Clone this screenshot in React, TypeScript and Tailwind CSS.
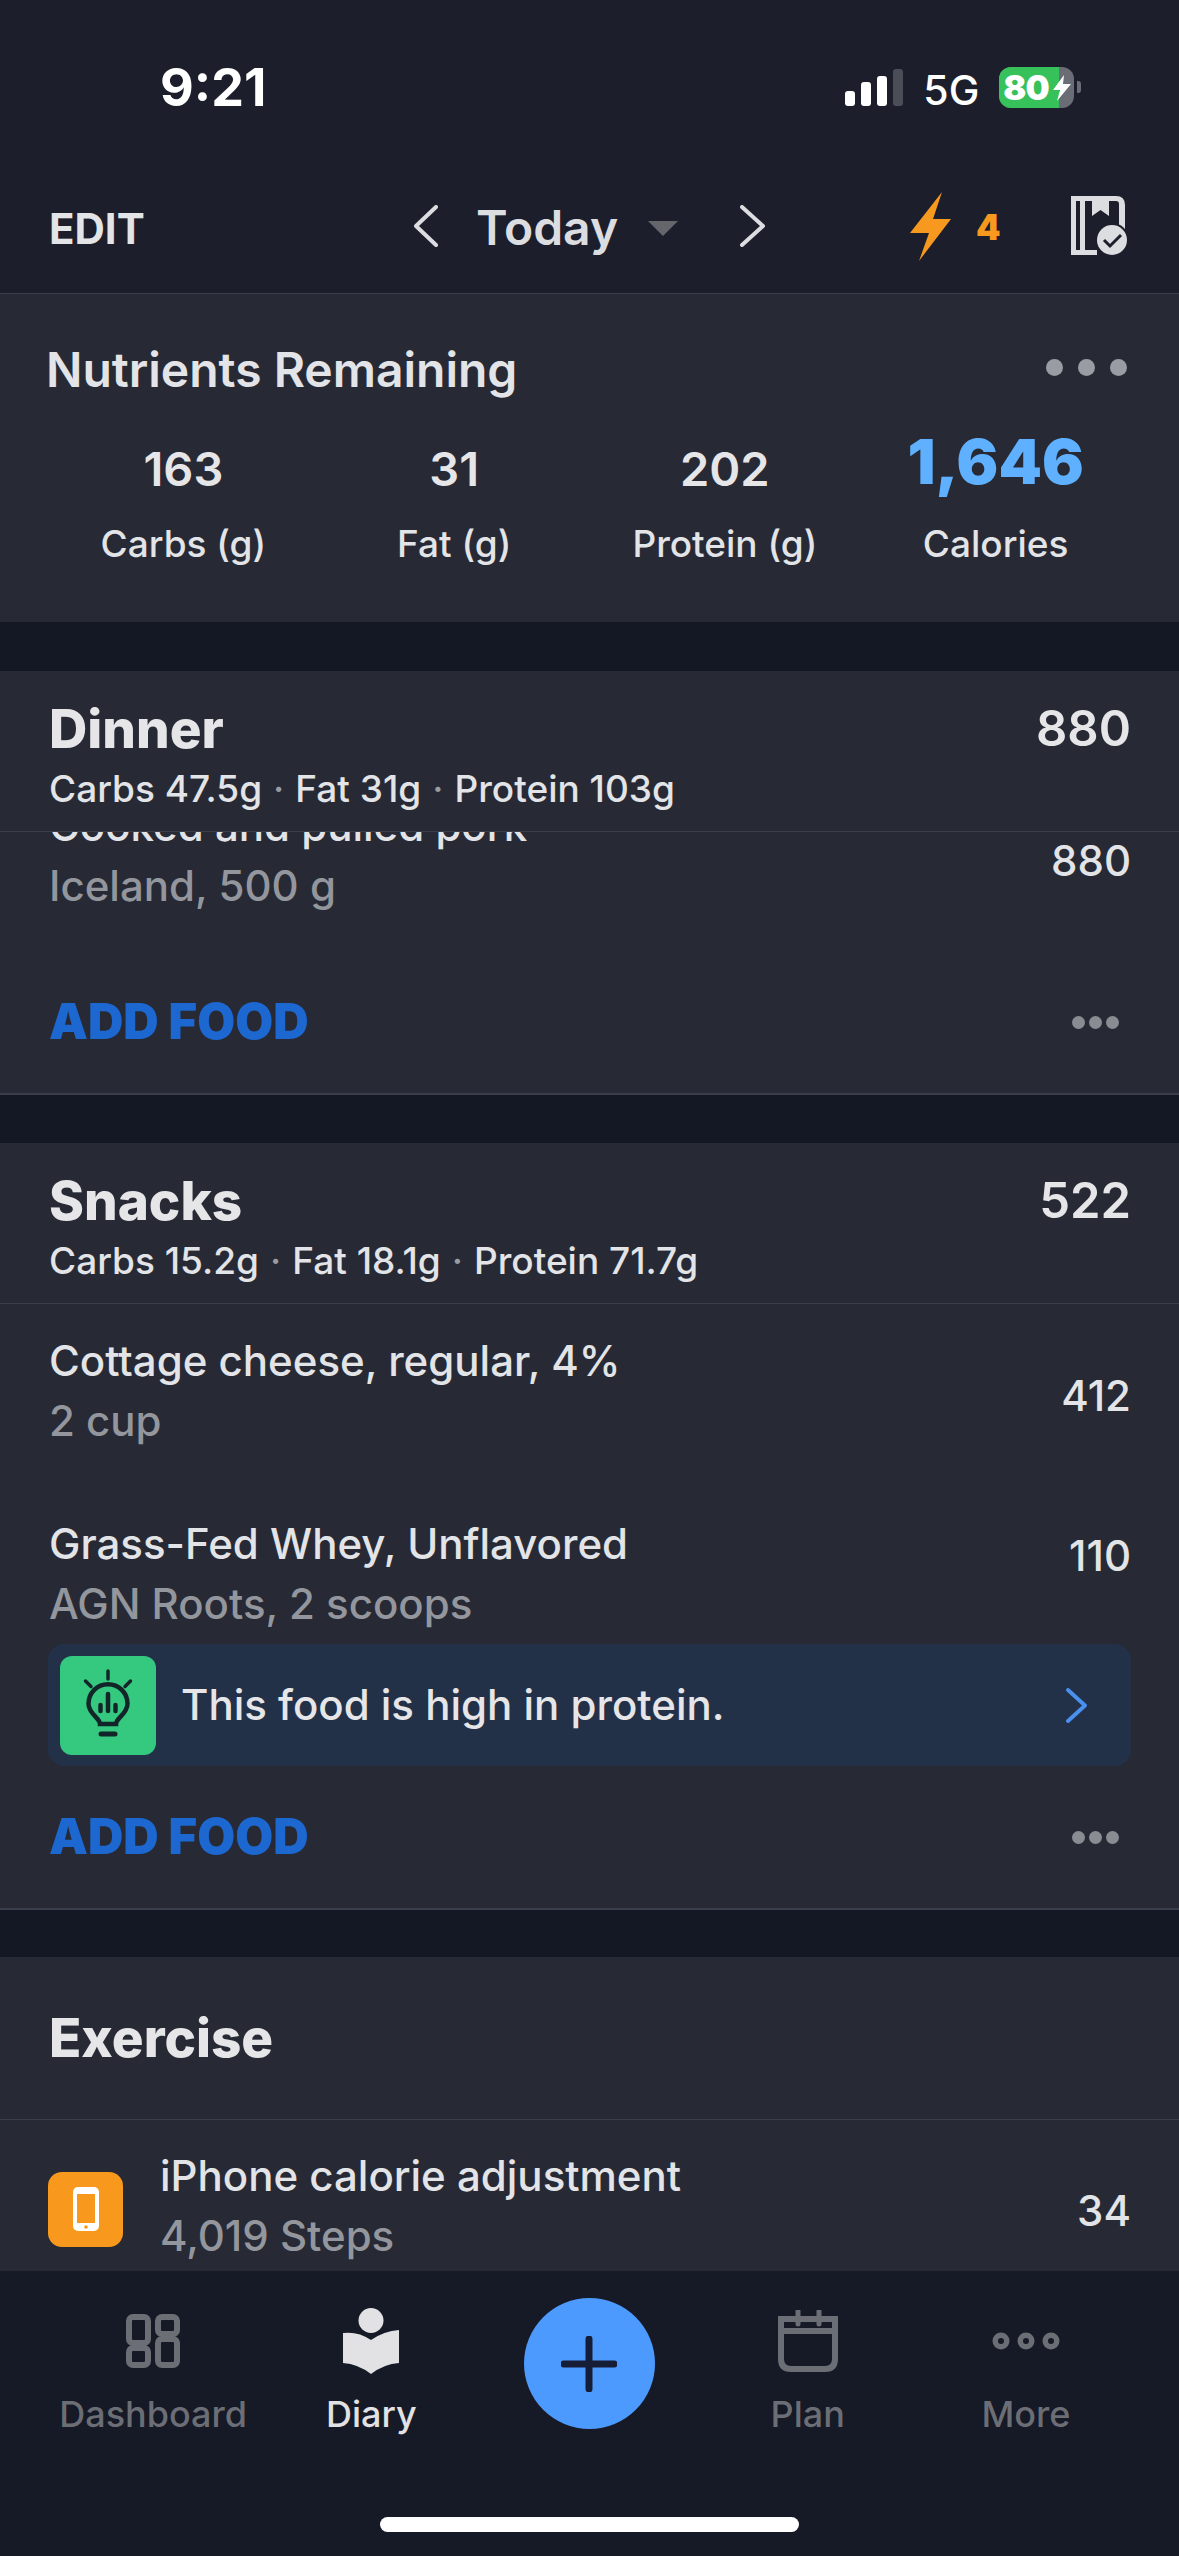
import React from 'react';

const font = { fontFamily: 'Inter, "Noto Sans", sans-serif' };

interface FoodRowProps {
  name: string;
  detail: string;
  calories: number;
  className?: string;
  calClass?: string;
}

const FoodRow: React.FC<FoodRowProps> = ({ name, detail, calories, className, calClass }) => (
  <div className={`flex items-center justify-between pl-[49px] pr-[48px] ${className ?? ''}`}>
    <div>
      <p className="text-[42px] font-medium leading-[50px] text-[#e3e4e7]">{name}</p>
      <p className="mt-[10px] text-[42px] font-medium leading-[50px] text-[#94969d]">{detail}</p>
    </div>
    <span className={`text-[42px] font-medium leading-[50px] text-[#e3e4e7] ${calClass ?? ''}`}>{calories}</span>
  </div>
);

const MealHeader = ({ title, calories, macros }: { title: string; calories: number; macros: string[] }) => (
  <div className="relative z-10 h-[161px] border-b border-[#3a3d4a] bg-[#272a35] pl-[49px] pr-[48px] pt-[28px]">
    <div className="flex items-center justify-between leading-[60px]">
      <span className="text-[53px] font-extrabold text-[#e6e6e8]">{title}</span>
      <span className="text-[49px] font-semibold text-[#e6e6e8]">{calories}</span>
    </div>
    <p className="mt-[9px] text-[37px] font-medium leading-[41px] text-[#e3e4e7]">
      {macros.map((m, i) => (
        <span key={m}>
          {i > 0 && <span className="mx-[11px] text-[#9a9ca3]">·</span>}
          {m}
        </span>
      ))}
    </p>
  </div>
);

const AddFoodRow = () => (
  <div className="flex items-center justify-between pl-[49px] pr-[60px]">
    <span className="text-[49px] font-black leading-[56px] text-[#1c67d0]">ADD FOOD</span>
    <div className="flex gap-[4px]">
      <span className="h-[13px] w-[13px] rounded-full bg-[#8a8c94]" />
      <span className="h-[13px] w-[13px] rounded-full bg-[#8a8c94]" />
      <span className="h-[13px] w-[13px] rounded-full bg-[#8a8c94]" />
    </div>
  </div>
);

const Chevron = ({ dir, w, h, color, sw }: { dir: 'left' | 'right'; w: number; h: number; color: string; sw: number }) => (
  <svg width={w} height={h} viewBox={`0 0 ${w} ${h}`} fill="none" stroke={color} strokeWidth={sw} strokeLinecap="round" strokeLinejoin="round">
    {dir === 'left' ? (
      <path d={`M${w - 2} 2 L2 ${h / 2} L${w - 2} ${h - 2}`} />
    ) : (
      <path d={`M2 2 L${w - 2} ${h / 2} L2 ${h - 2}`} />
    )}
  </svg>
);

const Bolt = () => (
  <svg width="41" height="69" viewBox="0 0 41 69" fill="#f7981f">
    <path d="M32 0 L0 41 L19 41 L9 69 L41 27 L23 27 Z" />
  </svg>
);

const PlanCheckIcon = () => (
  <svg width="57" height="60" viewBox="0 0 57 60">
    <path d="M0 0 H45 Q54 0 54 9 V40 H26 V59 H0 Z" fill="#dcdde0" />
    <path d="M5 5 H9 V54 H5 Z M14 5 H21 V54 H14 Z M38 5 H45 Q48 5 48 8 V40 H38 Z M21 20 L29.5 14 L38 20 V40 H26 V54 H21 Z" fill="#1c1f2b" />
    <circle cx="41" cy="44" r="17" fill="#1c1f2b" />
    <circle cx="41" cy="44" r="15" fill="#dcdde0" />
    <path d="M33 44 L39 50 L50 39" fill="none" stroke="#1c1f2b" strokeWidth="3" />
  </svg>
);

const BulbIcon = () => (
  <svg width="64" height="72" viewBox="0 0 64 72" fill="none" stroke="#12262a" strokeLinecap="round">
    <path d="M32 2 V10 M9.5 12 L15 17.5 M54.5 12 L49 17.5" strokeWidth="3.5" />
    <path d="M24 55 C24 49 12.5 45 12.5 34.7 A19.5 19.5 0 0 1 51.5 34.7 C51.5 45 40 49 40 55 Z" strokeWidth="4.5" />
    <path d="M24.5 36 V42 M32 25 V42 M39.5 36 V42" strokeWidth="4.5" />
    <path d="M25 65 H39" strokeWidth="5" />
  </svg>
);

const PhoneIcon = () => (
  <svg width="26" height="44" viewBox="0 0 26 44">
    <rect x="0" y="0" width="26" height="44" rx="5" fill="#ffffff" />
    <rect x="4" y="7" width="18" height="29" fill="#f8981d" />
    <circle cx="13" cy="40" r="1.8" fill="#f8981d" />
  </svg>
);

const DashboardIcon = () => (
  <svg width="54" height="54" viewBox="0 0 54 54" fill="none" stroke="#6c6e75" strokeWidth="6">
    <rect x="3" y="3" width="19" height="26" rx="4" />
    <rect x="32" y="3" width="19" height="17" rx="4" />
    <rect x="3" y="34" width="19" height="17" rx="4" />
    <rect x="32" y="25" width="19" height="26" rx="4" />
  </svg>
);

const DiaryIcon = () => (
  <svg width="58" height="66" viewBox="0 0 58 66" fill="#e2e2e4">
    <circle cx="29" cy="12.5" r="12.5" />
    <path d="M1 25 Q16 23 29 32 Q42 23 57 22 V55 Q42 56 29 66 Q16 56 1 55 Z" />
  </svg>
);

const PlanIcon = () => (
  <svg width="60" height="62" viewBox="0 0 60 62" fill="none" stroke="#6c6e75" strokeWidth="6">
    <path d="M3 9 H57 V49 Q57 59 47 59 H13 Q3 59 3 49 Z" />
    <path d="M3 21 H57" />
    <path d="M20 1 V14 M41 1 V14" strokeWidth="5" strokeLinecap="round" />
  </svg>
);

const MoreIcon = () => (
  <svg width="68" height="18" viewBox="0 0 68 18" fill="none" stroke="#6c6e75" strokeWidth="5.5">
    <circle cx="9" cy="9" r="5.75" />
    <circle cx="34" cy="9" r="5.75" />
    <circle cx="59" cy="9" r="5.75" />
  </svg>
);

const NavItem = ({ icon, label, active }: { icon: React.ReactNode; label: string; active?: boolean }) => (
  <div className="flex flex-col items-center">
    <div className="flex h-[70px] items-center">{icon}</div>
    <span className={`mt-[17px] text-[36px] font-medium leading-[42px] ${active ? 'text-[#e2e2e4]' : 'text-[#6c6e75]'}`}>
      {label}
    </span>
  </div>
);

export default function App() {
  const nutrients = [
    { value: '163', label: 'Carbs (g)' },
    { value: '31', label: 'Fat (g)' },
    { value: '202', label: 'Protein (g)' },
  ];

  return (
    <div className="flex h-[2556px] w-[1179px] flex-col overflow-hidden bg-[#141824]" style={font}>
      {/* Status bar and top bar */}
      <div className="h-[294px] shrink-0 border-b border-[#3a3d4a] bg-[#1c1f2b]">
        <div className="flex h-[176px] items-start pt-[57px]">
          <span className="ml-[160px] text-[52px] font-bold leading-[62px] text-white">9:21</span>
          <div className="ml-[579px] mt-[12px] flex h-[37px] items-end gap-[6px]">
            <span className="h-[15px] w-[10px] rounded-[3px] bg-white" />
            <span className="h-[24px] w-[10px] rounded-[3px] bg-white" />
            <span className="h-[30px] w-[10px] rounded-[3px] bg-white" />
            <span className="h-[37px] w-[10px] rounded-[3px] bg-[#4b4d57]" />
          </div>
          <span className="ml-[20px] mt-[8px] text-[41px] font-medium leading-[50px] text-white">5G</span>
          <div className="relative ml-[20px] mt-[10px] flex h-[41px] w-[75px] items-center overflow-hidden rounded-[12px] bg-[#6b6d76]">
            <div className="flex h-full w-[60px] items-center bg-[#36c15a] pl-[4px]">
              <span className="text-[34px] font-black leading-none tracking-tight text-white">80</span>
            </div>
            <svg className="absolute left-[54px] top-[8px]" width="18" height="26" viewBox="0 0 18 26" fill="#ffffff">
              <path d="M11 0 L0 15 H7 L4 26 L18 9 H10 Z" />
            </svg>
          </div>
          <span className="ml-[3px] mt-[24px] h-[12px] w-[4px] rounded-r-[3px] bg-[#6b6d76]" />
        </div>
        <div className="flex h-[100px] items-center">
          <span className="ml-[49px] mt-[6px] w-[365px] text-[42px] font-bold leading-none text-[#e3e4e7]">EDIT</span>
          <Chevron dir="left" w={24} h={42} color="#dcdde0" sw={4} />
          <span className="ml-[38px] mt-[3px] w-[141px] text-[48px] font-semibold leading-none text-[#dcdde0]">Today</span>
          <span className="ml-[31px] mt-[5px] h-0 w-0 border-x-[15px] border-t-[15px] border-x-transparent border-t-[#65666c]" />
          <div className="ml-[62px]">
            <Chevron dir="right" w={25} h={42} color="#dcdde0" sw={4} />
          </div>
          <div className="ml-[145px] flex items-center">
            <Bolt />
            <span className="ml-[25px] mt-[2px] text-[35px] font-black leading-none text-[#f7981f]">4</span>
          </div>
          <div className="ml-[70px]">
            <PlanCheckIcon />
          </div>
        </div>
      </div>

      <div className="flex-1 overflow-hidden">
        {/* Nutrients Remaining */}
        <section className="h-[328px] bg-[#272a35] pt-[48px]">
          <div className="flex items-center justify-between pl-[46px] pr-[52px]">
            <h2 className="text-[48px] font-semibold leading-[56px] text-[#e3e4e7]">Nutrients Remaining</h2>
            <div className="mb-[6px] flex gap-[15px]">
              <span className="h-[17px] w-[17px] rounded-full bg-[#9a9ca3]" />
              <span className="h-[17px] w-[17px] rounded-full bg-[#9a9ca3]" />
              <span className="h-[17px] w-[17px] rounded-full bg-[#9a9ca3]" />
            </div>
          </div>
          <div className="mt-[31px] grid grid-cols-4 px-[48px]">
            {nutrients.map((n) => (
              <div key={n.label} className="flex flex-col items-center">
                <span className="mt-[10px] h-[60px] text-[47px] font-semibold leading-[60px] text-[#e6e6e8]">{n.value}</span>
                <span className="mt-[23px] text-[37px] font-medium leading-[44px] text-[#e3e4e7]">{n.label}</span>
              </div>
            ))}
            <div className="flex flex-col items-center">
              <span className="h-[66px] text-[62px] font-black leading-[66px] text-[#5fb0ff]">1,646</span>
              <span className="mt-[27px] text-[37px] font-medium leading-[44px] text-[#e3e4e7]">Calories</span>
            </div>
          </div>
        </section>

        {/* Dinner */}
        <section className="mt-[49px] h-[424px] border-b-2 border-[#3a3d4a] bg-[#272a35]">
          <MealHeader title="Dinner" calories={880} macros={['Carbs 47.5g', 'Fat 31g', 'Protein 103g']} />
          <FoodRow className="-mt-[31px]" calClass="mt-[10px]" name="Cooked and pulled pork" detail="Iceland, 500 g" calories={880} />
          <div className="mt-[83px]">
            <AddFoodRow />
          </div>
        </section>

        {/* Snacks */}
        <section className="mt-[48px] h-[767px] border-b-2 border-[#3a3d4a] bg-[#272a35]">
          <MealHeader title="Snacks" calories={522} macros={['Carbs 15.2g', 'Fat 18.1g', 'Protein 71.7g']} />
          <FoodRow className="mt-[32px]" calClass="mt-[10px]" name="Cottage cheese, regular, 4%" detail="2 cup" calories={412} />
          <FoodRow className="mt-[73px]" calClass="mb-[36px]" name="Grass-Fed Whey, Unflavored" detail="AGN Roots, 2 scoops" calories={110} />
          <div className="mx-[48px] mt-[15px] flex h-[122px] items-center rounded-[16px] bg-[#233148] pl-[12px] pr-[44px]">
            <div className="flex h-[99px] w-[96px] items-center justify-center rounded-[12px] bg-[#35c97f]">
              <BulbIcon />
            </div>
            <span className="ml-[25px] flex-1 text-[42px] font-medium leading-[50px] text-[#e6e6e8]">This food is high in protein.</span>
            <Chevron dir="right" w={21} h={35} color="#4a90f0" sw={3.8} />
          </div>
          <div className="mt-[43px]">
            <AddFoodRow />
          </div>
        </section>

        {/* Exercise */}
        <section className="mt-[47px] bg-[#272a35] pb-[40px]">
          <div className="flex h-[163px] items-center border-b border-[#3a3d4a] pl-[49px]">
            <h2 className="text-[53px] font-extrabold leading-[60px] text-[#e6e6e8]">Exercise</h2>
          </div>
          <div className="flex items-center pl-[48px] pr-[48px] pt-[31px]">
            <div className="mt-[6px] flex h-[75px] w-[75px] items-center justify-center rounded-[14px] bg-[#f8981d]">
              <PhoneIcon />
            </div>
            <div className="ml-[37px] flex-1">
              <p className="text-[42px] font-medium leading-[50px] text-[#e3e4e7]">iPhone calorie adjustment</p>
              <p className="mt-[10px] text-[42px] font-medium leading-[50px] text-[#94969d]">4,019 Steps</p>
            </div>
            <span className="mt-[10px] text-[42px] font-medium leading-[50px] text-[#e3e4e7]">34</span>
          </div>
        </section>
      </div>

      {/* Bottom nav */}
      <nav className="relative h-[285px] shrink-0 bg-[#161926]">
        <div className="grid grid-cols-5 px-[44px] pt-[35px]">
          <NavItem icon={<DashboardIcon />} label="Dashboard" />
          <NavItem icon={<DiaryIcon />} label="Diary" active />
          <div className="flex justify-center">
            <div className="-mt-[8px] flex h-[131px] w-[131px] items-center justify-center rounded-full bg-[#4d9aff]">
              <svg width="56" height="56" viewBox="0 0 56 56" fill="none" stroke="#161d36" strokeWidth="7" strokeLinecap="round">
                <path d="M28 3 V53 M3 28 H53" />
              </svg>
            </div>
          </div>
          <NavItem icon={<PlanIcon />} label="Plan" />
          <NavItem icon={<MoreIcon />} label="More" />
        </div>
        <div className="absolute bottom-[24px] left-[380px] h-[15px] w-[419px] rounded-full bg-white" />
      </nav>
    </div>
  );
}
